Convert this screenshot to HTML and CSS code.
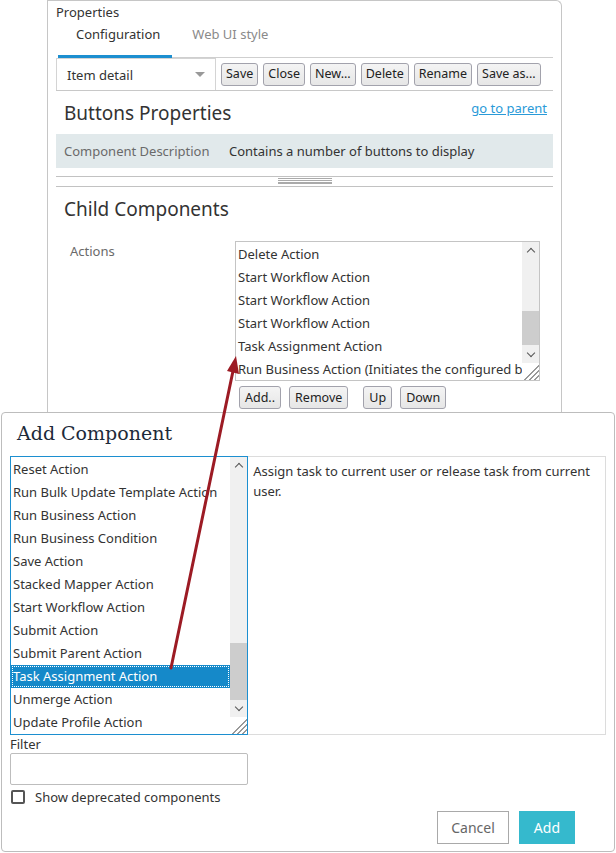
FILE: index.html
```html
<!DOCTYPE html>
<html lang="en">
<head>
  <meta charset="UTF-8">
  <title>Properties - Add Component</title>
  <link rel="stylesheet" href="styles.css">
</head>
<body>
  <div class="panel">
    <div class="panel-title">Properties</div>
    <div class="tabs">
      <div class="tab active">Configuration</div>
      <div class="tab">Web UI style</div>
    </div>

    <div class="toolbar">
      <div class="select">
        <span>Item detail</span>
        <span class="caret"></span>
      </div>
      <button class="btn">Save</button>
      <button class="btn">Close</button>
      <button class="btn">New...</button>
      <button class="btn">Delete</button>
      <button class="btn">Rename</button>
      <button class="btn">Save as...</button>
    </div>

    <div class="section-head">
      <h2>Buttons Properties</h2>
      <a class="parent-link" href="#">go to parent</a>
    </div>
    <div class="desc-row">
      <span class="desc-label">Component Description</span>
      <span class="desc-value">Contains a number of buttons to display</span>
    </div>

    <div class="splitter"><span class="grip"></span></div>

    <h2 class="child-title">Child Components</h2>
    <div class="field-row">
      <div class="field-label">Actions</div>
      <div class="field-body">
        <div class="listbox small">
          <ul class="items">
            <li>Delete Action</li>
            <li>Start Workflow Action</li>
            <li>Start Workflow Action</li>
            <li>Start Workflow Action</li>
            <li>Task Assignment Action</li>
            <li>Run Business Action (Initiates the configured business action)</li>
          </ul>
          <div class="scrollbar">
            <span class="arrow up"></span>
            <span class="track"><span class="thumb thumb-small"></span></span>
            <span class="arrow down"></span>
            <span class="resize"></span>
          </div>
        </div>
        <div class="list-actions">
          <button class="btn">Add..</button>
          <button class="btn">Remove</button>
          <button class="btn gap">Up</button>
          <button class="btn">Down</button>
        </div>
      </div>
    </div>
  </div>

  <!-- Modal dialog -->
  <div class="dialog">
    <h1 class="dialog-title">Add Component</h1>
    <div class="picker">
      <div class="listbox big focused">
        <ul class="items">
          <li>Reset Action</li>
          <li>Run Bulk Update Template Action</li>
          <li>Run Business Action</li>
          <li>Run Business Condition</li>
          <li>Save Action</li>
          <li>Stacked Mapper Action</li>
          <li>Start Workflow Action</li>
          <li>Submit Action</li>
          <li>Submit Parent Action</li>
          <li class="selected">Task Assignment Action</li>
          <li>Unmerge Action</li>
          <li>Update Profile Action</li>
        </ul>
        <div class="scrollbar">
          <span class="arrow up"></span>
          <span class="track"><span class="thumb thumb-big"></span></span>
          <span class="arrow down"></span>
          <span class="resize"></span>
        </div>
      </div>
      <div class="picker-desc">Assign task to current user or release task from current user.</div>
    </div>
    <label class="filter-label">Filter</label>
    <div class="filter-input"></div>
    <div class="check-row">
      <span class="checkbox"></span>
      <span>Show deprecated components</span>
    </div>
    <div class="dialog-buttons">
      <button class="btn-flat">Cancel</button>
      <button class="btn-flat primary">Add</button>
    </div>
  </div>

  <!-- Annotation arrow -->
  <svg class="annotation" width="616" height="853" viewBox="0 0 616 853">
    <line x1="171" y1="668" x2="233" y2="371" stroke="#9c1b24" stroke-width="3" stroke-linecap="round"/>
    <polygon points="236,356 239,374 227,371" fill="#9c1b24"/>
  </svg>
</body>
</html>
```

FILE: styles.css
```css
/* General */
* {
  box-sizing: border-box;
}

body {
  margin: 0;
  width: 616px;
  height: 853px;
  position: relative;
  overflow: hidden;
  background: #fff;
  font-family: "Noto Sans", "Open Sans", sans-serif;
  font-size: 13px;
  color: #333;
}

ul {
  list-style: none;
  margin: 0;
  padding: 0;
}

h1, h2 {
  margin: 0;
  font-weight: normal;
}

/* Properties panel */
.panel {
  margin-left: 47px;
  width: 515px;
  height: 440px;
  border: 1px solid #c6c6c6;
  border-bottom: none;
  border-radius: 0 6px 0 0;
  padding: 0 8px;
}

.panel-title {
  padding-top: 2px;
  line-height: 18px;
}

.tabs {
  display: flex;
  margin-left: 2px;
  border-bottom: 1px solid #cfcfcf;
}

.tab {
  padding: 4px 12px 14px 18px;
  line-height: 18px;
  color: #8a8a8a;
}

.tab + .tab {
  padding-left: 20px;
}

.tab.active {
  color: #333;
  border-bottom: 3px solid #1c8fd0;
  margin-bottom: -1px;
  padding-bottom: 12px;
}

.toolbar {
  display: flex;
  align-items: center;
  border-bottom: 1px solid #c8c8c8;
  height: 33px;
}

.select {
  flex-shrink: 0;
  width: 160px;
  height: 32px;
  border: 1px solid #d4d4d4;
  border-bottom: none;
  display: flex;
  align-items: center;
  justify-content: space-between;
  padding: 0 10px;
}

.caret {
  width: 0;
  height: 0;
  border-left: 5px solid transparent;
  border-right: 5px solid transparent;
  border-top: 5px solid #999;
}

.btn {
  font-family: inherit;
  font-size: 12.5px;
  color: #222;
  height: 23px;
  padding: 0 4px;
  margin-left: 5px;
  border: 1px solid #a2a2ac;
  border-radius: 3px;
  background: linear-gradient(#f4f4f4, #e6e6e6);
  line-height: 20px;
  white-space: nowrap;
  flex-shrink: 0;
}

.section-head {
  display: flex;
  justify-content: space-between;
  align-items: flex-start;
  padding: 9px 6px 0 8px;
  height: 43px;
}

.section-head h2 {
  font-size: 19px;
  line-height: 26px;
}

.parent-link {
  color: #2a9ad8;
  font-size: 13px;
  line-height: 16px;
}

.desc-row {
  display: flex;
  background: #e1e9eb;
  height: 34px;
  align-items: center;
  padding-left: 8px;
}

.desc-label {
  color: #6a6a6a;
  width: 165px;
}

.splitter {
  margin-top: 8px;
  height: 11px;
  border-top: 1px solid #c2c2c2;
  border-bottom: 1px solid #c2c2c2;
  display: flex;
  justify-content: center;
}

.grip {
  width: 54px;
  height: 6px;
  margin-top: 1px;
  border-top: 1px solid #aaa;
  border-bottom: 1px solid #aaa;
  background: linear-gradient(#fff 1px, #aaa 1px, #aaa 2px, #fff 2px);
  background-size: 100% 2px;
}

.child-title {
  font-size: 19px;
  line-height: 26px;
  padding: 9px 0 0 8px;
}

.field-row {
  display: flex;
  margin-top: 19px;
}

.field-label {
  width: 179px;
  padding: 1px 0 0 14px;
  color: #6a6a6a;
}

/* Listboxes */
.listbox {
  position: relative;
  border: 1px solid #c4c4c4;
  background: #fff;
  overflow: hidden;
}

.listbox.small {
  width: 305px;
  height: 140px;
}

.listbox.big {
  width: 239px;
  height: 279px;
  border-color: #1c8fd0;
}

.items {
  padding: 1px 17px 0 0;
}

.items li {
  height: 23px;
  line-height: 23px;
  padding-left: 2px;
  white-space: nowrap;
  overflow: hidden;
}

.items li.selected {
  background: #1589c9;
  color: #fff;
  outline: 1px dotted #fff;
  outline-offset: -2px;
}

.scrollbar {
  position: absolute;
  top: 0;
  right: 0;
  width: 17px;
  height: 100%;
  display: flex;
  flex-direction: column;
  background: #f0f0f0;
}

.arrow {
  height: 17px;
  display: flex;
  justify-content: center;
  align-items: center;
}

.arrow::before {
  content: "";
  width: 5px;
  height: 5px;
  border-left: 1.5px solid #555;
  border-top: 1.5px solid #555;
  transform: rotate(45deg);
  margin-top: 3px;
}

.arrow.down::before {
  transform: rotate(-135deg);
  margin-top: -3px;
}

.track {
  flex: 1;
  position: relative;
}

.thumb {
  position: absolute;
  left: 0;
  right: 0;
  background: #cdcdcd;
}

.thumb-small {
  top: 52px;
  height: 34px;
}

.thumb-big {
  top: 169px;
  height: 57px;
}

.resize {
  height: 17px;
  background:
    linear-gradient(135deg, #fff 55%, #999 55%, #999 60%, #fff 60%, #fff 70%, #999 70%, #999 75%, #fff 75%, #fff 85%, #999 85%, #999 90%, #fff 90%);
}

.list-actions {
  display: flex;
  margin-top: 5px;
}

.list-actions .btn {
  margin-left: 4px;
  margin-right: 4px;
  padding: 0 5px;
}

.list-actions .btn.gap {
  margin-left: 11px;
}

/* Dialog */
.dialog {
  position: absolute;
  left: 1px;
  top: 412px;
  width: 614px;
  height: 440px;
  background: #fff;
  border: 1px solid #bdbdbd;
  border-radius: 4px;
  padding: 0 8px;
}

.dialog-title {
  font-family: "DejaVu Serif", "Liberation Serif", serif;
  font-size: 19px;
  color: #1d2a3a;
  line-height: 26px;
  padding: 7px 0 0 7px;
  height: 43px;
}

.picker {
  display: flex;
}

.picker-desc {
  width: 359px;
  height: 279px;
  border: 1px solid #dcdcdc;
  border-left: none;
  padding: 4px 10px 0 5px;
  line-height: 20px;
}

.filter-label {
  display: block;
  height: 18px;
  line-height: 18px;
}

.filter-input {
  width: 238px;
  height: 32px;
  border: 1px solid #bdbdbd;
  border-radius: 2px;
}

.check-row {
  display: flex;
  align-items: center;
  gap: 10px;
  height: 18px;
  margin-top: 3px;
  padding-left: 1px;
}

.checkbox {
  width: 14px;
  height: 14px;
  border: 2px solid #555;
  border-radius: 2px;
}

.dialog-buttons {
  display: flex;
  justify-content: flex-end;
  gap: 10px;
  margin-top: 5px;
  padding-right: 31px;
}

.btn-flat {
  font-family: inherit;
  font-size: 14px;
  height: 33px;
  padding: 0 13px;
  border: 1px solid #a9a9a9;
  background: #fff;
  color: #666;
}

.btn-flat.primary {
  background: #35b9cd;
  border-color: #35b9cd;
  color: #fff;
  padding: 0 14px;
}

/* Annotation overlay */
.annotation {
  position: absolute;
  left: 0;
  top: 0;
  pointer-events: none;
}
```
